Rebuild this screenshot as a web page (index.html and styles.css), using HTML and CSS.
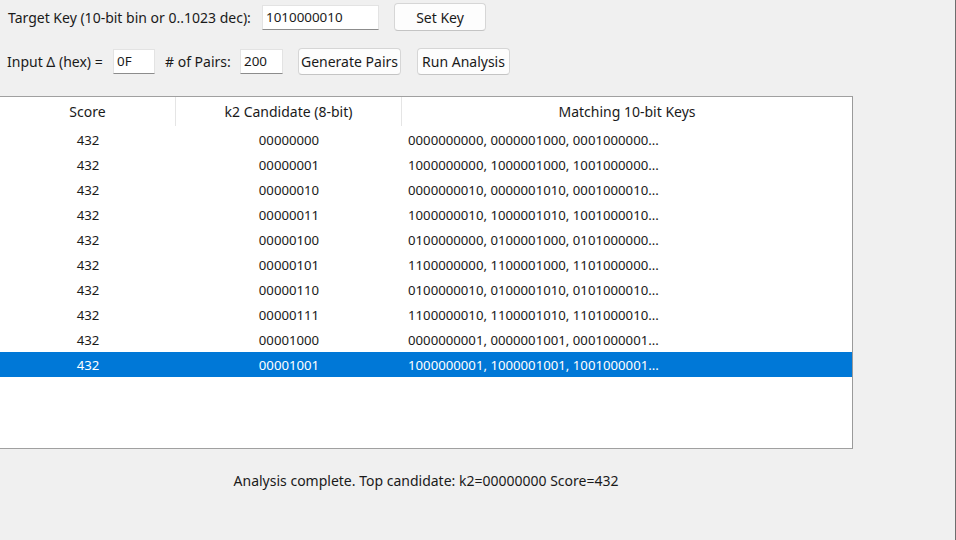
FILE: index.html
```html
<!DOCTYPE html>
<html>
<head>
<meta charset="utf-8">
<link rel="stylesheet" href="styles.css">
</head>
<body>
<div class="app">
  <div class="row row1">
    <span class="lbl lbl-key">Target Key (10-bit bin or 0..1023 dec):</span>
    <div class="entry entry-key">1010000010</div>
    <div class="btn btn-set">Set Key</div>
  </div>
  <div class="row row2">
    <span class="lbl lbl-delta">Input Δ (hex) =</span>
    <div class="entry entry-delta">0F</div>
    <span class="lbl lbl-pairs"># of Pairs:</span>
    <div class="entry entry-pairs">200</div>
    <div class="btn btn-gen">Generate Pairs</div>
    <div class="btn btn-run">Run Analysis</div>
  </div>
  <div class="table">
    <div class="thead">
      <div class="c c1 h">Score</div>
      <div class="c c2 h">k2 Candidate (8-bit)</div>
      <div class="c c3 h hc">Matching 10-bit Keys</div>
    </div>
    <div class="tr"><div class="c c1">432</div><div class="c c2">00000000</div><div class="c c3">0000000000, 0000001000, 0001000000...</div></div>
    <div class="tr"><div class="c c1">432</div><div class="c c2">00000001</div><div class="c c3">1000000000, 1000001000, 1001000000...</div></div>
    <div class="tr"><div class="c c1">432</div><div class="c c2">00000010</div><div class="c c3">0000000010, 0000001010, 0001000010...</div></div>
    <div class="tr"><div class="c c1">432</div><div class="c c2">00000011</div><div class="c c3">1000000010, 1000001010, 1001000010...</div></div>
    <div class="tr"><div class="c c1">432</div><div class="c c2">00000100</div><div class="c c3">0100000000, 0100001000, 0101000000...</div></div>
    <div class="tr"><div class="c c1">432</div><div class="c c2">00000101</div><div class="c c3">1100000000, 1100001000, 1101000000...</div></div>
    <div class="tr"><div class="c c1">432</div><div class="c c2">00000110</div><div class="c c3">0100000010, 0100001010, 0101000010...</div></div>
    <div class="tr"><div class="c c1">432</div><div class="c c2">00000111</div><div class="c c3">1100000010, 1100001010, 1101000010...</div></div>
    <div class="tr"><div class="c c1">432</div><div class="c c2">00001000</div><div class="c c3">0000000001, 0000001001, 0001000001...</div></div>
    <div class="tr sel"><div class="c c1">432</div><div class="c c2">00001001</div><div class="c c3">1000000001, 1000001001, 1001000001...</div></div>
  </div>
  <div class="status">Analysis complete. Top candidate: k2=00000000 Score=432</div>
</div>
</body>
</html>
```
FILE: styles.css
```css
html, body {
  margin: 0;
  padding: 0;
  background: #f0f0f0;
}
body {
  font-family: "Noto Sans", "Open Sans", sans-serif;
  font-size: 14px;
  color: #1a1a1a;
}
.app {
  width: 955px;
  height: 540px;
  border-right: 1px solid #6e6e6e;
  overflow: hidden;
  display: flex;
  flex-direction: column;
}
.row {
  display: flex;
  align-items: center;
}
.row1 {
  height: 34px;
  padding-left: 8px;
}
.row2 {
  height: 34px;
  margin-top: 10px;
  padding-left: 7px;
}
.lbl {
  white-space: nowrap;
}
.entry {
  box-sizing: border-box;
  height: 25px;
  background: #fff;
  border: 1px solid #e3e3e3;
  border-bottom: 1px solid #8c8c8c;
  padding: 0 3px;
  display: flex;
  align-items: center;
  white-space: nowrap;
  font-size: 13.4px;
}
.btn {
  box-sizing: border-box;
  background: #fdfdfd;
  border: 1px solid #d6d6d6;
  border-bottom-color: #c4c4c4;
  border-radius: 4px;
  display: flex;
  align-items: center;
  justify-content: center;
  white-space: nowrap;
}
.lbl-key { width: 254px; }
.entry-key { width: 117px; }
.btn-set { width: 92px; height: 28px; margin-left: 15px; }
.lbl-delta { width: 106px; }
.entry-delta { width: 42px; }
.lbl-pairs { margin-left: 10px; width: 75px; }
.entry-pairs { width: 43px; }
.btn-gen { width: 103px; height: 27px; margin-left: 15px; }
.btn-run { width: 93px; height: 27px; margin-left: 16px; }

.table {
  box-sizing: border-box;
  margin-top: 18px;
  margin-left: -1px;
  width: 854px;
  height: 353px;
  background: #fff;
  border: 1px solid #a0a0a0;
  border-right-color: #9a9a9a;
}
.thead {
  display: flex;
  height: 30px;
}
.tr {
  display: flex;
  height: 25px;
  font-size: 13.2px;
  line-height: 24px;
}
.c {
  display: flex;
  align-items: center;
  white-space: nowrap;
}
.c1 { width: 176px; justify-content: center; }
.c2 { width: 226px; justify-content: center; }
.c3 { flex: 1; padding-left: 6px; }
.h {
  border-right: 1px solid #e5e5e5;
  box-sizing: border-box;
  height: 29px;
}
.hc {
  justify-content: center;
  padding-left: 0;
  border-right: 0;
}
.tr.sel {
  background: #0078d7;
  color: #fff;
}
.status {
  width: 852px;
  text-align: center;
  margin-top: 22px;
}
```
